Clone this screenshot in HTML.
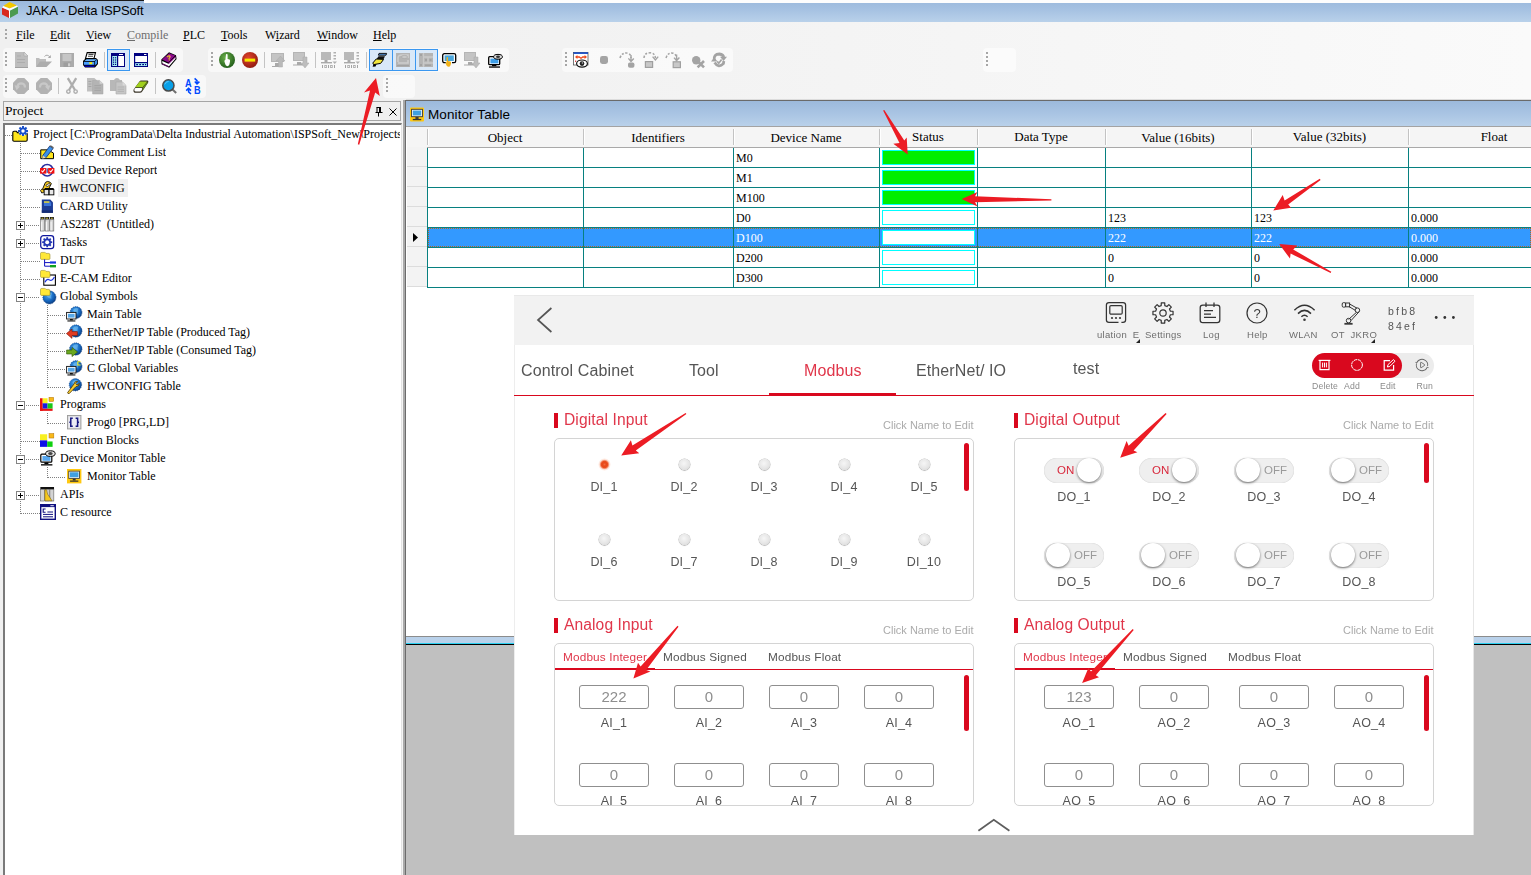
<!DOCTYPE html>
<html><head><meta charset="utf-8"><title>JAKA - Delta ISPSoft</title>
<style>
*{box-sizing:border-box;margin:0;padding:0}
html,body{width:1531px;height:875px;overflow:hidden;background:#f0f0f0}
body{position:relative;font-family:"Liberation Serif",serif;font-size:12px;color:#000}
.abs,.abs-c>*{position:absolute}
svg{position:absolute;overflow:visible}
.sans{font-family:"Liberation Sans",sans-serif}
/* title */
#title{left:0;top:0;width:1531px;height:22px;background:linear-gradient(#9ab8dc 0,#a6c2e2 45%,#b9d1ea 100%)}
#title .t{left:26px;top:2px;font:13px/18px "Liberation Sans",sans-serif;letter-spacing:-0.2px;color:#000;white-space:nowrap}
/* menu */
#menu{left:0;top:22px;width:1531px;height:78px;background:linear-gradient(90deg,#f0f0f0 0,#f0f0f0 18%,#f4f4f4 55%,#fafafa 100%)}
#menu span{position:absolute;top:5px;font:12px/16px "Liberation Serif",serif;white-space:nowrap}
#menu span.dis{color:#6d6d6d}
/* toolbars */
.tb{position:absolute;background:rgba(255,255,255,.55);border-radius:4px}
.grip{position:absolute;width:2px;height:14px;background:repeating-linear-gradient(#a6a6a6 0 2px,transparent 2px 4px)}
.sel{position:absolute;background:#d9e8f8;border:1px solid #3a97f0}
.vsep{position:absolute;width:1px;height:18px;background:#c4c4c4}
/* project panel */
#projhead{left:3px;top:101px;width:398px;height:20px;border:1px solid #a5a5a5;background:#f0f0f0}
#projhead .t{left:1px;top:0px;font:13.5px/18px "Liberation Serif",serif}
#tree{left:3px;top:123px;width:399px;height:760px;background:#fff;border-left:2px solid #7a7a7a;border-top:2px solid #7a7a7a;border-right:1px solid #e3e3e3}
.tr{position:absolute;white-space:nowrap;overflow:hidden;max-width:367px;font:12px/18px "Liberation Serif",serif;height:18px}
.hl{position:absolute;background:#f0f0f0}
.dotv{position:absolute;width:1px;background:repeating-linear-gradient(#808080 0 1px,transparent 1px 2px)}
.doth{position:absolute;height:1px;background:repeating-linear-gradient(90deg,#808080 0 1px,transparent 1px 2px)}
.pm{position:absolute;width:9px;height:9px;border:1px solid #848484;background:#fff}
.pm:before{content:"";position:absolute;left:1px;top:3px;width:5px;height:1px;background:#000}
.pm.plus:after{content:"";position:absolute;left:3px;top:1px;width:1px;height:5px;background:#000}
/* splitter */
#split{left:402px;top:100px;width:4px;height:775px;background:linear-gradient(90deg,#f4f4f4 0 1px,#a9a9a9 1px 3px,#6c6c6c 3px 4px)}
/* monitor */
#mon{left:406px;top:100px;width:1125px;height:545px;background:#fff}
#montitle{left:406px;top:100px;width:1125px;height:27px;background:linear-gradient(#9cb9db 0,#a9c4e3 50%,#b9d1ea 100%);border-top:1px solid #6a6a6a;border-bottom:1px solid #a3a3a3}
#montitle .t{left:22px;top:5px;font:13.5px/18px "Liberation Sans",sans-serif;letter-spacing:.1px;white-space:nowrap}
.th{position:absolute;top:127px;height:21px;background:#f5f5f5;border-bottom:1px solid #a9a9a9;font:13px/20px "Liberation Serif",serif;text-align:center;white-space:nowrap}
.hs{position:absolute;top:129px;width:2px;height:16px;background:linear-gradient(90deg,#c3c3c3 0 1px,#fff 1px 2px)}
.rh{position:absolute;left:407px;width:20px;height:20px;background:#f3f3f3;border-bottom:1px solid #dcdcdc}
.gl{position:absolute;background:#078080}
.ct{position:absolute;font:12px/20px "Liberation Serif",serif;white-space:nowrap}
.st{position:absolute;left:882px;width:93px;height:15px;border:1px solid #00ffff;background:#fff}
.st.on{background:#00ee00}
</style></head>
<body>
<div id="title" class="abs">
 <div class="abs" style="left:0;top:0;width:144px;height:1px;background:#1a1a1a"></div>
 <div class="abs" style="left:144px;top:0;width:1387px;height:3px;background:#fdfdfd"></div>
 <svg style="left:2px;top:2px" width="16" height="17" viewBox="0 0 16 17"><polygon points="1.2,4 7.5,0 15,3.5 7.6,6.6" fill="#f3c800"/><polygon points="0,5.5 7,8.6 7,16 0,12.6" fill="#d8281e"/><polygon points="8,8.6 16,4.6 16,11.6 8,16" fill="#4c9a50"/><polygon points="0,5.5 1.2,4 7.6,6.6 15,3.5 16,4.6 8,8.6 8,16 7,16 7,8.6" fill="#fff"/></svg>
 <div class="abs t">JAKA - Delta ISPSoft</div>
</div>
<div id="menu" class="abs">
 <div class="grip" style="left:5px;top:7px;height:10px"></div>
 <span style="left:16px"><u>F</u>ile</span><span style="left:50px"><u>E</u>dit</span><span style="left:86px"><u>V</u>iew</span><span class="dis" style="left:127px"><u>C</u>ompile</span><span style="left:183px"><u>P</u>LC</span><span style="left:221px"><u>T</u>ools</span><span style="left:265px">W<u>i</u>zard</span><span style="left:317px"><u>W</u>indow</span><span style="left:373px"><u>H</u>elp</span>
</div>
<!-- toolbar strips -->
<div class="tb" style="left:3px;top:48px;width:180px;height:24px"></div>
<div class="tb" style="left:208px;top:48px;width:301px;height:24px"></div>
<div class="tb" style="left:562px;top:48px;width:171px;height:24px"></div>
<div class="tb" style="left:983px;top:48px;width:33px;height:24px"></div>
<div class="tb" style="left:3px;top:75px;width:203px;height:23px"></div>
<div class="tb" style="left:383px;top:75px;width:32px;height:23px"></div>
<div class="grip" style="left:5px;top:52px"></div>
<div class="grip" style="left:211px;top:52px"></div>
<div class="grip" style="left:565px;top:52px"></div>
<div class="grip" style="left:986px;top:52px"></div>
<div class="grip" style="left:5px;top:78px"></div>
<div class="grip" style="left:386px;top:78px"></div>
<div class="vsep" style="left:104px;top:52px;height:16px"></div>
<div class="vsep" style="left:155px;top:52px;height:16px"></div>
<div class="vsep" style="left:264px;top:52px;height:16px"></div>
<div class="vsep" style="left:315px;top:52px;height:16px"></div>
<div class="vsep" style="left:366px;top:52px;height:16px"></div>
<div class="vsep" style="left:58px;top:78px;height:16px"></div>
<div class="vsep" style="left:155px;top:78px;height:16px"></div>
<div class="sel" style="left:107px;top:49px;width:23px;height:22px"></div>
<div class="sel" style="left:369px;top:49px;width:24px;height:22px"></div>
<div class="sel" style="left:392px;top:49px;width:24px;height:22px"></div>
<div class="sel" style="left:415px;top:49px;width:23px;height:22px"></div>
<!-- row1 icons -->
<svg style="left:15px;top:52px" width="13" height="16" viewBox="0 0 13 16"><path d="M0,0H9L13,4V16H0Z" fill="#bdbdbd"/><path d="M9,0V4H13Z" fill="#d8d8d8" stroke="#a8a8a8" stroke-width=".6"/><path d="M2,4H6M2,7.5H10M2,10.5H10" stroke="#adadad" stroke-width="1"/><path d="M0,15.5H13" stroke="#a0a0a0"/></svg>
<svg style="left:36px;top:54px" width="16" height="14" viewBox="0 0 16 14"><path d="M0,13V4H3L4,5H10V8" fill="#bcbcbc"/><path d="M0,13L4,7.5H16L10.5,13Z" fill="#adadad"/><path d="M8.5,2.5Q11,-0.5 14,3.2" fill="none" stroke="#a8a8a8" stroke-width="1"/><path d="M14.8,1V4H11.8Z" fill="#a8a8a8"/></svg>
<svg style="left:60px;top:53px" width="14" height="14" viewBox="0 0 14 14"><rect width="14" height="14" fill="#ababab"/><rect x="2.5" y="1" width="9" height="7" fill="#c6c6c6"/><rect x="3.5" y="9.5" width="7.5" height="4.5" fill="#9e9e9e"/><rect x="8" y="10.3" width="2.3" height="3" fill="#cfcfcf"/></svg>
<svg style="left:82px;top:52px" width="16" height="16" viewBox="0 0 16 16"><path d="M1,9L4,6H14L16,8V12L13,15.5H3L1,13Z" fill="#000"/><path d="M3.5,6.5L5.2,0.6H13.5L12,6.5Z" fill="#fff" stroke="#000" stroke-width="1.1"/><path d="M6.5,2.4H11.5M6,4.2H11" stroke="#444" stroke-width="1.1"/><rect x="1.8" y="9.8" width="10.4" height="3" fill="#4aa0ff"/><rect x="7.3" y="10.2" width="3" height="2" fill="#ffee00"/><path d="M12.8,9.5L15.2,7.5V11.5L12.8,13.5Z" fill="#3a8be8"/><path d="M4.5,7.2H13L14.8,7.2L12.5,9H2.5Z" fill="#6ab4ff"/><rect x="2.5" y="13.6" width="10" height="1.2" fill="#0000d0"/></svg>
<svg style="left:111px;top:53px" width="14" height="14" viewBox="0 0 14 14"><rect width="14" height="14" fill="#000080"/><rect x="1.2" y="3" width="4.8" height="10" fill="#a6f2f2"/><rect x="7.2" y="3" width="5.8" height="10" fill="#fff"/><rect x="8" y="1" width="4" height="1" fill="#fff"/><g fill="#000080"><rect x="2" y="4.2" width="1.2" height="1.2"/><rect x="4" y="4.2" width="1.2" height="1.2"/><rect x="2" y="6.4" width="1.2" height="1.2"/><rect x="4" y="6.4" width="1.2" height="1.2"/><rect x="2" y="8.6" width="1.2" height="1.2"/><rect x="4" y="8.6" width="1.2" height="1.2"/><rect x="2" y="10.8" width="1.2" height="1.2"/><rect x="4" y="10.8" width="1.2" height="1.2"/></g></svg>
<svg style="left:134px;top:53px" width="14" height="14" viewBox="0 0 14 14"><rect width="14" height="14" fill="#000080"/><rect x="1.2" y="3" width="11.8" height="6" fill="#fff"/><rect x="1.2" y="10.2" width="11.8" height="2.8" fill="#a6f2f2"/><rect x="10" y="1" width="2.4" height="1" fill="#fff"/><g fill="#000080"><rect x="2.2" y="11" width="1.8" height="1.2"/><rect x="5.2" y="11" width="1.8" height="1.2"/><rect x="8.2" y="11" width="1.8" height="1.2"/><rect x="11" y="11" width="1.2" height="1.2"/></g></svg>
<svg style="left:161px;top:52px" width="16" height="16" viewBox="0 0 16 16"><path d="M0.3,7.5L8,0.3L15,3.2L15.6,7L8.2,15.7L0.5,12.2Z" fill="#000"/><path d="M1,7.6L8.2,1.2L14.2,3.6L7.4,10.6Z" fill="#8a0a8a"/><path d="M1.2,9L7.4,11.8L14.5,5V6.8L8,14.2L1.4,11.2Z" fill="#fff"/><path d="M7.4,11.2L14.4,4.2L14.5,5.2L7.6,12.2Z" fill="#8a0a8a"/><path d="M1.3,11.6L8,14.6L8.2,15.2L1.2,12.2Z" fill="#8a0a8a"/><text x="5.6" y="8.4" font-family="Liberation Sans,sans-serif" font-weight="bold" font-size="7" fill="#ffe800" transform="rotate(-12 8 6)">?</text></svg>
<svg style="left:219px;top:52px" width="16" height="16" viewBox="0 0 16 16"><defs><radialGradient id="gg" cx=".4" cy=".35" r=".7"><stop offset="0" stop-color="#6bb04a"/><stop offset="1" stop-color="#1f5a18"/></radialGradient><radialGradient id="rg" cx=".4" cy=".35" r=".7"><stop offset="0" stop-color="#e2442c"/><stop offset="1" stop-color="#8e1a10"/></radialGradient></defs><circle cx="8" cy="8" r="8" fill="url(#gg)"/><path d="M7,2.2Q8,1.6 8.6,2.4V7L10.6,7.6Q11.2,8 11,9.4L10.4,12.6Q9.6,14.2 8.4,14.2Q6.6,14 6.4,12.6L5.4,9.4Q5.4,8 6.4,7.8Z" fill="#fff"/></svg>
<svg style="left:242px;top:52px" width="16" height="16" viewBox="0 0 16 16"><circle cx="8" cy="8" r="8" fill="url(#rg)"/><rect x="2.6" y="6.6" width="10.6" height="3" fill="#f6ea00"/></svg>
<svg style="left:271px;top:53px" width="15" height="15" viewBox="0 0 15 15"><path d="M0,0H13V9H0Z" fill="#b5b5b5"/><rect x="1" y="1" width="11" height="7" fill="#c4c4c4"/><path d="M4,10H9V12H11V14H1V13H4Z" fill="#a9a9a9"/><path d="M9.5,3L14,8H11.5V14H7.5V8H5Z" fill="#b9b9b9" stroke="#aaa" stroke-width=".5"/></svg>
<svg style="left:293px;top:52px" width="16" height="16" viewBox="0 0 16 16"><path d="M0,0H12V9H0Z" fill="#b5b5b5"/><rect x="1" y="1" width="10" height="7" fill="#c4c4c4"/><path d="M4,10H8V12H10V13.5H0V12.5H4Z" fill="#a9a9a9"/><path d="M10,5H14V11H16L12,16L8,11H10Z" fill="#bdbdbd" stroke="#aaa" stroke-width=".5"/></svg>
<svg style="left:321px;top:52px" width="16" height="16" viewBox="0 0 16 16"><rect x="0" y="0" width="10" height="8" fill="#b9b9b9"/><rect x="3.5" y="8" width="3" height="2" fill="#a9a9a9"/><rect x="0" y="10" width="11" height="1.4" fill="#a9a9a9"/><g fill="#b0b0b0"><rect x="12.5" y="0" width="2.5" height="1.5"/><rect x="12.5" y="3" width="2.5" height="1.5"/><rect x="12.5" y="6" width="2.5" height="1.5"/><path d="M11.5,9.5H16L13.75,12Z"/></g><g fill="#a3a3a3"><rect x="1" y="13" width="1" height="3"/><rect x="3.4" y="13" width="2.4" height="3"/><rect x="7" y="13" width="1" height="3"/><rect x="9.2" y="13" width="2.4" height="3"/><rect x="13" y="13" width="1" height="3"/></g><g fill="#f5f5f5"><rect x="4.1" y="13.8" width="1" height="1.4"/><rect x="9.9" y="13.8" width="1" height="1.4"/></g></svg>
<svg style="left:344px;top:52px" width="16" height="16" viewBox="0 0 16 16"><rect x="0" y="0" width="10" height="8" fill="#b9b9b9"/><rect x="3.5" y="8" width="3" height="2" fill="#a9a9a9"/><rect x="0" y="10" width="11" height="1.4" fill="#a9a9a9"/><g fill="#b0b0b0"><rect x="12.5" y="0" width="2.5" height="1.5"/><rect x="12.5" y="3" width="2.5" height="1.5"/><rect x="12.5" y="6" width="2.5" height="1.5"/><path d="M11.5,9.5H16L13.75,12Z"/></g><g fill="#a3a3a3"><rect x="1" y="13" width="1" height="3"/><rect x="3.4" y="13" width="2.4" height="3"/><rect x="7" y="13" width="1" height="3"/><rect x="9.2" y="13" width="2.4" height="3"/><rect x="13" y="13" width="1" height="3"/></g><g fill="#f5f5f5"><rect x="4.1" y="13.8" width="1" height="1.4"/><rect x="9.9" y="13.8" width="1" height="1.4"/></g></svg>
<svg style="left:372px;top:53px" width="16" height="15" viewBox="0 0 16 15"><path d="M7,0.4H14.6L14,2.2H6.4Z" fill="#5aa0f0" stroke="#000" stroke-width=".9"/><path d="M6.5,3.2H13L11.5,6.2H4.5Z" fill="#111"/><path d="M4.2,6L11.6,6.4L8.6,10.4L1.6,11.6L0.8,10Z" fill="#f2e63c" stroke="#000" stroke-width="1"/><path d="M1.4,11.6L4.4,11.2L3.6,13.6L0.6,13.8Z" fill="#000"/></svg>
<svg style="left:396px;top:53px" width="14" height="14" viewBox="0 0 14 14"><rect width="14" height="14" fill="#b4b4b4"/><path d="M2,9V5Q2,2 6,2H12V5M2,10H12V7" fill="none" stroke="#cdcdcd" stroke-width="1.6"/><ellipse cx="8.5" cy="4" rx="3" ry="1.6" fill="#c8c8c8" stroke="#a2a2a2" stroke-width=".6"/><rect x="1" y="12" width="12" height="1.4" fill="#a2a2a2"/></svg>
<svg style="left:419px;top:53px" width="14" height="14" viewBox="0 0 14 14"><rect width="14" height="14" fill="#b4b4b4"/><path d="M4.5,0V14M4.5,4H14M4.5,10H14M9,4V10" stroke="#c9c9c9" stroke-width="1.3" fill="none"/><g fill="#a2a2a2"><rect x="1" y="1" width="2" height="2"/><rect x="1" y="11" width="2" height="2"/><rect x="6" y="6" width="2" height="2"/><rect x="10.5" y="6" width="2" height="2"/><rect x="6" y="11.5" width="6" height="1.5"/></g></svg>
<svg style="left:442px;top:53px" width="15" height="15" viewBox="0 0 15 15"><rect x="0.7" y="0.7" width="13" height="9" rx="1.6" fill="#fff" stroke="#000" stroke-width="1.3"/><rect x="2.6" y="2.4" width="9.2" height="5.6" fill="#4aa6dc"/><rect x="3.8" y="9" width="6.2" height="2.4" fill="#f8f8f8"/><path d="M4.6,4.4Q5.3,3.8 6,4.4V8L8.4,8.6Q9.4,9 9,10.6L8.4,12.6Q7.8,14 6.4,13.8Q5,13.6 4.4,12.2L3.6,10.2Q3.6,9.4 4.6,9.2Z" fill="#f2b21a"/></svg>
<svg style="left:464px;top:52px" width="16" height="16" viewBox="0 0 16 16"><path d="M0,0H12V9H0Z" fill="#b5b5b5"/><rect x="1" y="1" width="10" height="7" fill="#c4c4c4"/><path d="M4,10H8V12H10V13.5H0V12.5H4Z" fill="#a9a9a9"/><path d="M10,5H14V11H16L12,16L8,11H10Z" fill="#bdbdbd" stroke="#aaa" stroke-width=".5"/></svg>
<svg style="left:488px;top:54px" width="15" height="14" viewBox="0 0 15 14"><rect x="0.7" y="2.7" width="11" height="8" rx="1" fill="#fff" stroke="#000" stroke-width="1.3"/><rect x="2.4" y="4.6" width="8" height="4.8" fill="#3f9fe8"/><rect x="4" y="10.8" width="4.4" height="1.4" fill="#000"/><rect x="1" y="12.4" width="11" height="1.3" fill="#000"/><ellipse cx="10" cy="2.8" rx="4.4" ry="2.4" fill="#ddd" stroke="#000" stroke-width="1"/><ellipse cx="10" cy="2.8" rx="2" ry="1.3" fill="#333"/></svg>
<!-- debug toolbar -->
<svg style="left:573px;top:52px" width="16" height="16" viewBox="0 0 16 16"><rect x="0.5" y="0.5" width="14.5" height="12.5" fill="#fff" stroke="#555" stroke-width=".8"/><rect x="0.5" y="0.3" width="14.5" height="1.6" fill="#1048c8"/><path d="M2,5L4.4,3V4.2H6.5L8,5.4L9.5,4.2H11.6V3L14,5L11.6,7V5.8H9.8L8,7L6.2,5.8H4.4V7Z" fill="#f0481a"/><rect x="2" y="8.6" width="1.2" height="1.2" fill="#e02020"/><ellipse cx="9" cy="11.6" rx="5.4" ry="3.6" fill="#fff" stroke="#111" stroke-width="1.2"/><circle cx="9" cy="11.6" r="2.3" fill="#222"/><circle cx="9.4" cy="11" r=".8" fill="#bbb"/></svg>

<svg style="left:600px;top:56px" width="8" height="8" viewBox="0 0 8 8"><rect width="8" height="8" rx="2.4" fill="#a4a4a4"/></svg>
<svg style="left:619px;top:52px" width="16" height="16" viewBox="0 0 16 16"><path d="M1,6Q3,0 9,1.2Q12,2.4 12,6" fill="none" stroke="#a4a4a4" stroke-width="1.5" stroke-dasharray="2.2 1.6"/><path d="M12,3V9M9.4,6.4L12,9.4L14.8,6.4" fill="none" stroke="#a4a4a4" stroke-width="1.4"/><rect x="9" y="10.4" width="6.4" height="5.4" rx="1.8" fill="#a4a4a4"/></svg>
<svg style="left:643px;top:52px" width="16" height="16" viewBox="0 0 16 16"><path d="M1,6Q1.4,0.6 7.4,0.8Q12,1.2 12.4,6" fill="none" stroke="#a4a4a4" stroke-width="1.5" stroke-dasharray="2.2 1.6"/><path d="M9.6,4.6L12.4,8L15.2,4.6" fill="none" stroke="#a4a4a4" stroke-width="1.4"/><rect x="2.4" y="9.6" width="7.2" height="5.8" fill="#c8c8c8" stroke="#a0a0a0" stroke-width="1.2"/></svg>
<svg style="left:665px;top:52px" width="16" height="16" viewBox="0 0 16 16"><path d="M1,6Q3,0 8,1.2Q11,2.4 11.4,5" fill="none" stroke="#a4a4a4" stroke-width="1.5" stroke-dasharray="2.2 1.6"/><path d="M11.6,2.4V8.6M9,5.6L11.6,8.6L14.4,5.6" fill="none" stroke="#a4a4a4" stroke-width="1.4"/><rect x="8.2" y="9.8" width="7.2" height="5.8" fill="#c8c8c8" stroke="#a0a0a0" stroke-width="1.2"/></svg>
<svg style="left:692px;top:56px" width="13" height="12" viewBox="0 0 13 12"><circle cx="4.2" cy="4.2" r="4.2" fill="#a4a4a4"/><path d="M5.6,5L12,11.4M12,5L5.6,11.4" stroke="#a4a4a4" stroke-width="2.6"/></svg>
<svg style="left:711px;top:52px" width="16" height="16" viewBox="0 0 16 16"><path d="M3.2,8.4Q2.4,2.2 8.4,2Q12.4,2.4 12.6,5.4" fill="none" stroke="#a4a4a4" stroke-width="2.8"/><path d="M9,4.8H16L12.6,9Z" fill="#a4a4a4"/><path d="M0,9.4H6.6L3.2,5.6Z" fill="#a4a4a4"/><path d="M3.6,10.4Q7.6,16.6 12.4,11.6L12.8,9" fill="none" stroke="#a4a4a4" stroke-width="2.8"/><path d="M6.2,9.4L7.8,11.2L10.6,7.6" fill="none" stroke="#a4a4a4" stroke-width="1.7"/></svg>
<!-- row2 icons -->
<svg style="left:13px;top:78px" width="16" height="16" viewBox="0 0 16 16"><path d="M4.7,0H11.3L16,4.7V11.3L11.3,16H4.7L0,11.3V4.7Z" fill="#b2b2b2"/><path d="M4.4,9.6Q4.6,5.4 8.4,5.4Q12,5.6 12,9.6" fill="none" stroke="#c8c8c8" stroke-width="2.2"/><path d="M1.6,7.2L7,8.6L3.6,12.2Z" fill="#c8c8c8"/></svg>
<svg style="left:36px;top:78px" width="16" height="16" viewBox="0 0 16 16"><path d="M4.7,0H11.3L16,4.7V11.3L11.3,16H4.7L0,11.3V4.7Z" fill="#b2b2b2"/><path d="M4,9.6Q4,5.6 7.6,5.4Q11.4,5.4 11.6,9.6" fill="none" stroke="#c8c8c8" stroke-width="2.2"/><path d="M14.4,7.2L9,8.6L12.4,12.2Z" fill="#c8c8c8"/></svg>
<svg style="left:66px;top:78px" width="12" height="16" viewBox="0 0 12 16"><path d="M1.8,0.2L9,12M10.2,0.2L3,12" stroke="#adadad" stroke-width="2.3" fill="none"/><circle cx="2.4" cy="13.6" r="1.7" fill="none" stroke="#adadad" stroke-width="1.4"/><circle cx="9.6" cy="13.6" r="1.7" fill="none" stroke="#adadad" stroke-width="1.4"/></svg>
<svg style="left:87px;top:78px" width="16" height="16" viewBox="0 0 16 16"><path d="M0,0H7.4L10,2.6V13.4H0Z" fill="#c0c0c0"/><path d="M5.6,2.4H12.6L16,5.8V16H5.6Z" fill="#b4b4b4" stroke="#a6a6a6" stroke-width=".5"/><path d="M1.4,3.5H4.4M1.4,6H4.4M1.4,8.5H4.4M7.4,7.6H14M7.4,10H14M7.4,12.4H14" stroke="#a3a3a3" stroke-width=".9"/><path d="M12.6,2.4V5.8H16Z" fill="#d4d4d4"/></svg>
<svg style="left:110px;top:78px" width="16" height="16" viewBox="0 0 16 16"><path d="M0,2H4Q5.4,-0.6 8.6,0.4L10,2H12V13H0Z" fill="#b8b8b8"/><path d="M6,4H12.6L16,7.4V16H6Z" fill="#c6c6c6" stroke="#ababab" stroke-width=".6"/><path d="M7.6,9H14M7.6,11.2H14M7.6,13.4H14" stroke="#b0b0b0" stroke-width=".9"/><path d="M12.6,4V7.4H16Z" fill="#dadada"/></svg>
<svg style="left:133px;top:80px" width="16" height="14" viewBox="0 0 16 14"><path d="M0.6,9.4L6.6,1.2Q7,0.5 8,0.5H14.4Q15.8,0.7 15.2,2.4L9.2,11.6Q8.4,12.8 7,12.8H2Q0,12.4 0.6,9.4Z" fill="#3a3428"/><path d="M2.2,7.2L6.8,1.4H14.2L9.6,7.2Z" fill="#a0d01c"/><path d="M10,7.6L14.6,1.8L14.4,3.2L9.4,10.6Z" fill="#6c9c14"/><path d="M1.4,9.2Q1.6,8 3,8H8.4Q9.6,8 9,9.4L8.4,10.8Q8,11.6 7,11.6H2.6Q1,11.4 1.4,9.2Z" fill="#fff"/></svg>
<svg style="left:162px;top:79px" width="15" height="15" viewBox="0 0 15 15"><path d="M10,10L14.2,14" stroke="#707070" stroke-width="2"/><circle cx="6.4" cy="6.4" r="5.6" fill="#08a0e8" stroke="#4a4a4a" stroke-width="1.5"/><path d="M2.8,5.4Q3.6,2.6 6.6,2.4" fill="none" stroke="#60c8f8" stroke-width="1"/></svg>
<svg style="left:185px;top:77px" width="16" height="18" viewBox="0 0 16 18"><text x="0" y="10.2" font-family="Liberation Sans,sans-serif" font-weight="bold" font-size="11.5" fill="#0048ff" transform="scale(.8 1)">A</text><text x="11.4" y="17.2" font-family="Liberation Sans,sans-serif" font-weight="bold" font-size="11.5" fill="#0048ff" transform="scale(.8 1)">B</text><path d="M9.6,1.4L12,3.6V6.4M9.8,4.6L12,7L14.4,4.6" fill="none" stroke="#0048ff" stroke-width="1.5"/><path d="M6,17L3.6,14.8V11.8M1.2,13.6L3.6,11.2L6,13.6" fill="none" stroke="#0048ff" stroke-width="1.5"/></svg>
<!-- separator line under toolbars -->
<div class="abs" style="left:406px;top:99px;width:1125px;height:1px;background:#dcdcdc"></div>
<svg width="0" height="0" style="left:0;top:0"><defs><radialGradient id="gl" cx=".4" cy=".35" r=".75"><stop offset="0" stop-color="#4aa4ea"/><stop offset=".55" stop-color="#1668c0"/><stop offset="1" stop-color="#08306e"/></radialGradient></defs></svg>
<div id="projhead" class="abs"><div class="abs t">Project</div>
<svg style="left:371px;top:5px" width="8" height="10" viewBox="0 0 8 10"><path d="M1.5,0.5H6M2,0.5V5M5.5,0.5V5M4.5,0.5V5M0.5,5.5H7.5M3.5,6V9.5" fill="none" stroke="#000" stroke-width="1"/></svg>
<svg style="left:385px;top:6px" width="8" height="8" viewBox="0 0 8 8"><path d="M0.5,0.5L7.5,7.5M7.5,0.5L0.5,7.5" stroke="#000" stroke-width="1"/></svg></div>
<div id="tree" class="abs"></div>
<div class="hl" style="left:58px;top:179px;width:70px;height:18px"></div>
<div class="dotv" style="left:20px;top:143px;height:371px"></div>
<div class="doth" style="left:5px;top:135px;width:8px"></div>
<div class="dotv" style="left:47px;top:305px;height:83px"></div>
<div class="dotv" style="left:47px;top:413px;height:11px"></div>
<div class="dotv" style="left:47px;top:467px;height:11px"></div>
<svg style="left:12px;top:126px" width="16" height="16" viewBox="0 0 16 16"><path d="M0.8,6.5Q0.8,5.2 2,5.2H4.4L5.4,6.6H14Q15.2,6.6 15.2,8V14Q15.2,15.2 14,15.2H2Q0.8,15.2 0.8,14Z" fill="#ffe61e" stroke="#000" stroke-width="1.1"/><circle cx="11" cy="5" r="4.6" fill="#fff"/><g fill="#1a50c8"><circle cx="11" cy="5" r="3.5"/><rect x="10" y="0" width="2" height="10"/><rect x="6" y="4" width="10" height="2"/><rect x="10" y="0" width="2" height="10" transform="rotate(45 11 5)"/><rect x="10" y="0" width="2" height="10" transform="rotate(-45 11 5)"/></g><circle cx="11" cy="5" r="1.7" fill="#fff"/></svg>
<div class="tr" style="left:33px;top:125px">Project [C:\ProgramData\Delta Industrial Automation\ISPSoft_New\Projects</div>
<div class="doth" style="left:21px;top:153px;width:19px"></div>
<svg style="left:40px;top:145px" width="14.4" height="14.4" viewBox="0 0 16 16"><path d="M0.8,5.4H9L15,9V15.2H0.8Z" fill="#ffe61e" stroke="#000" stroke-width="1.1"/><path d="M3,11.8L10.8,1.2L14.6,3.8L6.6,14.2L2.6,15Z" fill="#3a90e8" stroke="#14306a" stroke-width=".9"/><path d="M3,11.8L6.6,14.2L2.6,15Z" fill="#f4d8a0"/><path d="M10.8,1.2L12,0.2L15.4,2.6L14.6,3.8Z" fill="#606060"/></svg>
<div class="tr" style="left:60px;top:143px">Device Comment List</div>
<div class="doth" style="left:21px;top:171px;width:19px"></div>
<svg style="left:40px;top:163px" width="14.4" height="14.4" viewBox="0 0 16 16"><circle cx="8" cy="8" r="6.4" fill="#fff" stroke="#2a2ea0" stroke-width="1.8"/><rect x="0" y="5.6" width="7" height="6.2" fill="#f01010"/><rect x="9" y="5.6" width="7" height="6.2" fill="#f01010"/><path d="M1.6,8.4L3,10L5.4,6.8M10.6,8.4L12,10L14.4,6.8" fill="none" stroke="#fff" stroke-width="1.2"/><rect x="7.4" y="6" width="1.2" height="5" fill="#2a2ea0"/></svg>
<div class="tr" style="left:60px;top:161px">Used Device Report</div>
<div class="doth" style="left:21px;top:189px;width:19px"></div>
<svg style="left:40px;top:181px" width="14.4" height="14.4" viewBox="0 0 16 16"><path d="M2,11L6,1.6Q8,-0.4 11,1.2L12.6,3L8,12Z" fill="#f4c820" stroke="#000" stroke-width="1"/><path d="M6.6,4.6L10.6,2.6L11.4,4.2L7.6,6.4Z" fill="#fff" stroke="#000" stroke-width=".7"/><path d="M0.6,10.6Q1.6,8.2 4,9.4L5,12L2,13.4Z" fill="#f4c820" stroke="#000" stroke-width=".9"/><rect x="4.6" y="9.4" width="5.2" height="6" fill="#e8e8e8" stroke="#000" stroke-width="1"/><rect x="10.2" y="9.4" width="5.2" height="6" fill="#e8e8e8" stroke="#000" stroke-width="1"/><rect x="5.2" y="7.8" width="10" height="1.6" fill="#000"/></svg>
<div class="tr" style="left:60px;top:179px">HWCONFIG</div>
<div class="doth" style="left:21px;top:207px;width:19px"></div>
<svg style="left:40px;top:199px" width="14.4" height="14.4" viewBox="0 0 16 16"><path d="M2,0.6H11.4L14.4,3.6V15.4H2Z" fill="#1c3c94"/><path d="M4.4,2.6H10.8L12.4,4.2V7.8H4.4Z" fill="#3c74d8"/><rect x="4.4" y="2.6" width="6" height="1.6" fill="#e8d830"/><path d="M2,12.6H14.4V15.4H2Z" fill="#142c74"/></svg>
<div class="tr" style="left:60px;top:197px">CARD Utility</div>
<div class="doth" style="left:26px;top:225px;width:14px"></div>
<div class="pm plus" style="left:16px;top:221px"></div>
<svg style="left:40px;top:217px" width="14.4" height="14.4" viewBox="0 0 16 16"><g><rect x="0.6" y="0" width="4.4" height="2.6" fill="#111"/><rect x="5.8" y="0" width="4.4" height="2.6" fill="#111"/><rect x="11" y="0" width="4.4" height="2.6" fill="#111"/><rect x="1.6" y="0.8" width="2.2" height="1" fill="#f4e040"/><rect x="6.8" y="0.8" width="2.2" height="1" fill="#f4e040"/><rect x="12" y="0.8" width="2.2" height="1" fill="#f4e040"/><rect x="0.6" y="2.6" width="4.4" height="13" fill="#d4d4d4" stroke="#555" stroke-width=".6"/><rect x="5.8" y="2.6" width="4.4" height="13" fill="#d4d4d4" stroke="#555" stroke-width=".6"/><rect x="11" y="2.6" width="4.4" height="13" fill="#d4d4d4" stroke="#555" stroke-width=".6"/><rect x="1.2" y="5" width="1.4" height="10" fill="#f6f6f6"/><rect x="6.4" y="5" width="1.4" height="10" fill="#f6f6f6"/><rect x="11.6" y="5" width="1.4" height="10" fill="#f6f6f6"/></g></svg>
<div class="tr" style="left:60px;top:215px">AS228T&nbsp; (Untitled)</div>
<div class="doth" style="left:26px;top:243px;width:14px"></div>
<div class="pm plus" style="left:16px;top:239px"></div>
<svg style="left:40px;top:235px" width="14.4" height="14.4" viewBox="0 0 16 16"><rect x="0.8" y="0.8" width="14.4" height="14.4" rx="3" fill="#fff" stroke="#10189c" stroke-width="1.4"/><g fill="#2438b4"><circle cx="8" cy="8" r="4.2"/><rect x="7" y="2.4" width="2" height="11.2"/><rect x="2.4" y="7" width="11.2" height="2"/><rect x="7" y="2.4" width="2" height="11.2" transform="rotate(45 8 8)"/><rect x="7" y="2.4" width="2" height="11.2" transform="rotate(-45 8 8)"/></g><circle cx="8" cy="8" r="2.2" fill="#fff"/></svg>
<div class="tr" style="left:60px;top:233px">Tasks</div>
<div class="doth" style="left:21px;top:261px;width:19px"></div>
<svg style="left:40px;top:252px" width="16" height="16" viewBox="0 0 16 16"><path d="M0.5,1.5Q0.5,0.4 1.8,0.4H4.6Q5.6,0.4 6,1.4H9Q10,1.6 10,3V6.6Q10,7.4 9,7.4H1.6Q0.5,7.4 0.5,6.4Z" fill="#ffe838" stroke="#8a7a10" stroke-width=".5"/><path d="M4.6,7.4V14.2H10M4.6,10.6H10" fill="none" stroke="#1010c0" stroke-width="1"/><rect x="10" y="9.4" width="6" height="2.2" fill="#1838e0"/><rect x="10" y="13" width="6" height="2.4" fill="#10a020"/></svg>
<div class="tr" style="left:60px;top:251px">DUT</div>
<div class="doth" style="left:21px;top:279px;width:19px"></div>
<svg style="left:40px;top:270px" width="16" height="16" viewBox="0 0 16 16"><rect x="3.8" y="5" width="11.6" height="10.2" fill="#fff" stroke="#000" stroke-width="1.1"/><path d="M5,12.2Q7,8.2 9.6,10Q12,11.4 14.4,7" fill="none" stroke="#1830e0" stroke-width="1.2"/><path d="M0.5,1.5Q0.5,0.4 1.8,0.4H4.6Q5.6,0.4 6,1.4H9Q10,1.6 10,3V6.6Q10,7.4 9,7.4H1.6Q0.5,7.4 0.5,6.4Z" fill="#ffe838" stroke="#8a7a10" stroke-width=".5"/></svg>
<div class="tr" style="left:60px;top:269px">E-CAM Editor</div>
<div class="doth" style="left:26px;top:297px;width:14px"></div>
<div class="pm" style="left:16px;top:293px"></div>
<svg style="left:40px;top:288px" width="16" height="16" viewBox="0 0 16 16"><circle cx="9.4" cy="9.4" r="6.6" fill="url(#gl)"/><path d="M6.1000000000000005,6.76q1.9799999999999998,-3.3 5.9399999999999995,-1.9799999999999998q-1.32,3.3 -0.66,5.9399999999999995q-3.9599999999999995,-0.66 -5.28,-3.9599999999999995z" fill="#7cc4f4" opacity=".55"/><circle cx="9.4" cy="9.4" r="6.6" fill="none" stroke="#0c3a7a" stroke-width=".6" stroke-dasharray="1.2 1"/><path d="M0.5,1.5Q0.5,0.4 1.8,0.4H4.6Q5.6,0.4 6,1.4H9Q10,1.6 10,3V6.6Q10,7.4 9,7.4H1.6Q0.5,7.4 0.5,6.4Z" fill="#ffe838" stroke="#8a7a10" stroke-width=".5"/></svg>
<div class="tr" style="left:60px;top:287px">Global Symbols</div>
<div class="doth" style="left:48px;top:315px;width:18px"></div>
<svg style="left:66px;top:306px" width="16" height="16" viewBox="0 0 16 16"><circle cx="10" cy="6.6" r="6" fill="url(#gl)"/><path d="M7.0,4.199999999999999q1.7999999999999998,-3.0 5.4,-1.7999999999999998q-1.2000000000000002,3.0 -0.6000000000000001,5.4q-3.5999999999999996,-0.6000000000000001 -4.800000000000001,-3.5999999999999996z" fill="#7cc4f4" opacity=".55"/><circle cx="10" cy="6.6" r="6" fill="none" stroke="#0c3a7a" stroke-width=".6" stroke-dasharray="1.2 1"/><rect x="0.6" y="6.4" width="9.4" height="6.6" fill="#fff" stroke="#111" stroke-width=".9"/><rect x="2" y="7.8" width="6.6" height="3.8" fill="#58a8e8"/><rect x="4" y="13" width="2.8" height="1.4" fill="#111"/><rect x="1.4" y="14.4" width="8" height="1.1" fill="#111"/></svg>
<div class="tr" style="left:87px;top:305px">Main Table</div>
<div class="doth" style="left:48px;top:333px;width:18px"></div>
<svg style="left:66px;top:324px" width="16" height="16" viewBox="0 0 16 16"><circle cx="9.8" cy="7" r="6.2" fill="url(#gl)"/><path d="M6.700000000000001,4.52q1.8599999999999999,-3.1 5.58,-1.8599999999999999q-1.2400000000000002,3.1 -0.6200000000000001,5.58q-3.7199999999999998,-0.6200000000000001 -4.960000000000001,-3.7199999999999998z" fill="#7cc4f4" opacity=".55"/><circle cx="9.8" cy="7" r="6.2" fill="none" stroke="#0c3a7a" stroke-width=".6" stroke-dasharray="1.2 1"/><path d="M0.4,9.6L6,5V7.6H11.4V11.6H6V14.4Z" fill="#e03a20" stroke="#7a1408" stroke-width=".6"/></svg>
<div class="tr" style="left:87px;top:323px">EtherNet/IP Table (Produced Tag)</div>
<div class="doth" style="left:48px;top:351px;width:18px"></div>
<svg style="left:66px;top:342px" width="16" height="16" viewBox="0 0 16 16"><circle cx="9.8" cy="7" r="6.2" fill="url(#gl)"/><path d="M6.700000000000001,4.52q1.8599999999999999,-3.1 5.58,-1.8599999999999999q-1.2400000000000002,3.1 -0.6200000000000001,5.58q-3.7199999999999998,-0.6200000000000001 -4.960000000000001,-3.7199999999999998z" fill="#7cc4f4" opacity=".55"/><circle cx="9.8" cy="7" r="6.2" fill="none" stroke="#0c3a7a" stroke-width=".6" stroke-dasharray="1.2 1"/><path d="M11.6,10L6,5.4V8H0.6V12H6V14.6Z" fill="#6aa820" stroke="#2c5008" stroke-width=".6"/></svg>
<div class="tr" style="left:87px;top:341px">EtherNet/IP Table (Consumed Tag)</div>
<div class="doth" style="left:48px;top:369px;width:18px"></div>
<svg style="left:66px;top:360px" width="16" height="16" viewBox="0 0 16 16"><circle cx="10" cy="6.6" r="6" fill="url(#gl)"/><path d="M7.0,4.199999999999999q1.7999999999999998,-3.0 5.4,-1.7999999999999998q-1.2000000000000002,3.0 -0.6000000000000001,5.4q-3.5999999999999996,-0.6000000000000001 -4.800000000000001,-3.5999999999999996z" fill="#7cc4f4" opacity=".55"/><circle cx="10" cy="6.6" r="6" fill="none" stroke="#0c3a7a" stroke-width=".6" stroke-dasharray="1.2 1"/><rect x="0.6" y="6.4" width="9.4" height="6.6" fill="#fff" stroke="#111" stroke-width=".9"/><rect x="2" y="7.8" width="6.6" height="3.8" fill="#58a8e8"/><rect x="4" y="13" width="2.8" height="1.4" fill="#111"/><rect x="1.4" y="14.4" width="8" height="1.1" fill="#111"/><path d="M14.6,1.8H11.8V5H14.6" fill="none" stroke="#f8f020" stroke-width="1.1"/></svg>
<div class="tr" style="left:87px;top:359px">C Global Variables</div>
<div class="doth" style="left:48px;top:387px;width:18px"></div>
<svg style="left:66px;top:378px" width="16" height="16" viewBox="0 0 16 16"><circle cx="9.4" cy="6.8" r="6.2" fill="url(#gl)"/><path d="M6.300000000000001,4.319999999999999q1.8599999999999999,-3.1 5.58,-1.8599999999999999q-1.2400000000000002,3.1 -0.6200000000000001,5.58q-3.7199999999999998,-0.6200000000000001 -4.960000000000001,-3.7199999999999998z" fill="#7cc4f4" opacity=".55"/><circle cx="9.4" cy="6.8" r="6.2" fill="none" stroke="#0c3a7a" stroke-width=".6" stroke-dasharray="1.2 1"/><path d="M1.6,14.6L8,6Q8.6,3 11.6,3.4L9.8,5.6L11,7L13.4,5.6Q13,8.6 10,8.6L3.4,15.4Q1.6,16 1.6,14.6Z" fill="#f8cc30" stroke="#4a3400" stroke-width=".8"/></svg>
<div class="tr" style="left:87px;top:377px">HWCONFIG Table</div>
<div class="doth" style="left:26px;top:405px;width:14px"></div>
<div class="pm" style="left:16px;top:401px"></div>
<svg style="left:40px;top:397px" width="14.4" height="14.4" viewBox="0 0 16 16"><rect x="0" y="1.4" width="3" height="14" fill="#e81010"/><rect x="0" y="12.8" width="14" height="2.6" fill="#e81010"/><rect x="3" y="1.4" width="5.4" height="5.6" fill="#f8f020"/><rect x="3" y="7" width="5.4" height="5.8" fill="#1818e0"/><rect x="8.4" y="7" width="5.6" height="5.8" fill="#18c818"/><rect x="10" y="0.4" width="5.2" height="4.6" fill="#f8b818" stroke="#a86800" stroke-width=".5"/></svg>
<div class="tr" style="left:60px;top:395px">Programs</div>
<div class="doth" style="left:48px;top:423px;width:18px"></div>
<svg style="left:67px;top:415px" width="14.4" height="14.4" viewBox="0 0 16 16"><rect x="0.5" y="0.5" width="15" height="15" fill="#d8d8d8" stroke="#9a9a9a"/><rect x="1.8" y="1.8" width="12.4" height="12.4" fill="#ececf4"/><path d="M6.4,3.6H4.2V12.4H6.4M9.6,3.6H11.8V12.4H9.6M4.2,8H2.6M11.8,8H13.4" fill="none" stroke="#181880" stroke-width="1.7"/></svg>
<div class="tr" style="left:87px;top:413px">Prog0 [PRG,LD]</div>
<div class="doth" style="left:21px;top:441px;width:19px"></div>
<svg style="left:40px;top:433px" width="14.4" height="14.4" viewBox="0 0 16 16"><rect x="0" y="1.4" width="8" height="6.8" fill="#f8f020"/><rect x="0" y="8.2" width="8" height="7.2" fill="#1010e8"/><rect x="8" y="9.4" width="6" height="6" fill="#10d010"/><rect x="10" y="0.6" width="5.4" height="5" fill="#f8b818" stroke="#a86800" stroke-width=".5"/></svg>
<div class="tr" style="left:60px;top:431px">Function Blocks</div>
<div class="doth" style="left:26px;top:459px;width:14px"></div>
<div class="pm" style="left:16px;top:455px"></div>
<svg style="left:40px;top:450px" width="16" height="16" viewBox="0 0 16 16"><rect x="0.8" y="4.2" width="11" height="8" rx="1" fill="#fff" stroke="#000" stroke-width="1.2"/><rect x="2.4" y="6" width="8" height="4.8" fill="#58a8f0"/><rect x="4.4" y="12.4" width="4" height="1.6" fill="#000"/><rect x="1" y="14.2" width="11.4" height="1.3" fill="#000"/><ellipse cx="10.4" cy="3.6" rx="4.8" ry="2.8" fill="#e4e4e4" stroke="#000" stroke-width="1"/><ellipse cx="10.4" cy="3.6" rx="2.2" ry="1.5" fill="#444"/></svg>
<div class="tr" style="left:60px;top:449px">Device Monitor Table</div>
<div class="doth" style="left:48px;top:477px;width:18px"></div>
<svg style="left:67px;top:469px" width="14.4" height="14.4" viewBox="0 0 16 16"><rect x="0" y="0" width="16" height="16" fill="#ffc810"/><rect x="2" y="2.4" width="12" height="8" fill="#fff" stroke="#333" stroke-width=".9"/><rect x="3.2" y="3.6" width="9.6" height="5.6" fill="#40a0e0"/><rect x="6.4" y="10.8" width="3.2" height="2" fill="#333"/><rect x="3.4" y="12.8" width="9.2" height="1.4" fill="#333"/></svg>
<div class="tr" style="left:87px;top:467px">Monitor Table</div>
<div class="doth" style="left:26px;top:495px;width:14px"></div>
<div class="pm plus" style="left:16px;top:491px"></div>
<svg style="left:40px;top:487px" width="14.4" height="14.4" viewBox="0 0 16 16"><rect x="0.4" y="0" width="15.2" height="2.6" fill="#111"/><rect x="0.6" y="2.6" width="4.4" height="13" fill="#d4d4d4" stroke="#555" stroke-width=".6"/><rect x="5.8" y="2.6" width="4.4" height="13" fill="#d4d4d4" stroke="#555" stroke-width=".6"/><rect x="11" y="2.6" width="4.4" height="13" fill="#d4d4d4" stroke="#555" stroke-width=".6"/><path d="M5.4,3V15.4H13.4L10.6,11Q8,9 7.4,3Z" fill="#f4c820" stroke="#5a4400" stroke-width=".5"/></svg>
<div class="tr" style="left:60px;top:485px">APIs</div>
<div class="doth" style="left:21px;top:513px;width:19px"></div>
<svg style="left:40px;top:504px" width="16" height="16" viewBox="0 0 16 16"><rect x="0.7" y="0.7" width="14.6" height="14.6" fill="#fff" stroke="#101080" stroke-width="1.4"/><rect x="0.7" y="0.7" width="14.6" height="2.4" fill="#101080"/><rect x="10.4" y="1.3" width="3.4" height=".9" fill="#fff"/><path d="M5.6,5H3.2V8.2H5.6" fill="none" stroke="#101080" stroke-width="1.1"/><path d="M7.4,8H13M3,10.4H13M3,12.8H13" stroke="#101080" stroke-width="1"/></svg>
<div class="tr" style="left:60px;top:503px">C resource</div>
<div id="split" class="abs"></div>
<div id="mon" class="abs"></div>
<div id="montitle" class="abs"><svg style="left:4px;top:6px" width="14" height="15" viewBox="0 0 14 14"><rect width="14" height="14" rx="1" fill="#ffc810"/><rect x="1.6" y="1.8" width="10.8" height="7.4" fill="#fff" stroke="#333" stroke-width=".9"/><rect x="2.8" y="3" width="8.4" height="5" fill="#40a0e0"/><rect x="5.4" y="9.6" width="3.2" height="1.8" fill="#333"/><rect x="2.8" y="11.4" width="8.4" height="1.3" fill="#333"/></svg><div class="abs t">Monitor Table</div></div>
<div class="th" style="left:407px;width:20px;line-height:19px"></div>
<div class="th" style="left:427px;width:156px;line-height:21px">Object</div>
<div class="th" style="left:583px;width:150px;line-height:21px">Identifiers</div>
<div class="th" style="left:733px;width:146px;line-height:21px">Device Name</div>
<div class="th" style="left:879px;width:98px;line-height:19px">Status</div>
<div class="th" style="left:977px;width:128px;line-height:19px">Data Type</div>
<div class="th" style="left:1105px;width:146px;line-height:21px">Value (16bits)</div>
<div class="th" style="left:1251px;width:157px;line-height:19px">Value (32bits)</div>
<div class="th" style="left:1408px;width:172px;line-height:19px">Float</div>
<div class="hs" style="left:427px"></div>
<div class="hs" style="left:583px"></div>
<div class="hs" style="left:733px"></div>
<div class="hs" style="left:879px"></div>
<div class="hs" style="left:977px"></div>
<div class="hs" style="left:1105px"></div>
<div class="hs" style="left:1251px"></div>
<div class="hs" style="left:1408px"></div>
<div class="rh" style="top:147px"></div>
<div class="ct" style="left:736px;top:148px">M0</div>
<div class="st on" style="top:150px"></div>
<div class="rh" style="top:167px"></div>
<div class="ct" style="left:736px;top:168px">M1</div>
<div class="st on" style="top:170px"></div>
<div class="rh" style="top:187px"></div>
<div class="ct" style="left:736px;top:188px">M100</div>
<div class="st on" style="top:190px"></div>
<div class="rh" style="top:207px"></div>
<div class="ct" style="left:736px;top:208px">D0</div>
<div class="ct" style="left:1108px;top:208px">123</div>
<div class="ct" style="left:1254px;top:208px">123</div>
<div class="ct" style="left:1411px;top:208px">0.000</div>
<div class="st" style="top:210px"></div>
<div class="rh" style="top:227px"></div>
<div class="abs" style="left:428px;top:228px;width:1103px;height:19px;background:#3399ff;outline:1px dotted #b06a20;outline-offset:-1px"></div>
<svg style="left:413px;top:233px" width="5" height="9" viewBox="0 0 5 9"><path d="M0,0L5,4.5L0,9Z" fill="#000"/></svg>
<div class="ct" style="color:#fff;left:736px;top:228px">D100</div>
<div class="ct" style="color:#fff;left:1108px;top:228px">222</div>
<div class="ct" style="color:#fff;left:1254px;top:228px">222</div>
<div class="ct" style="color:#fff;left:1411px;top:228px">0.000</div>
<div class="st" style="top:230px"></div>
<div class="rh" style="top:247px"></div>
<div class="ct" style="left:736px;top:248px">D200</div>
<div class="ct" style="left:1108px;top:248px">0</div>
<div class="ct" style="left:1254px;top:248px">0</div>
<div class="ct" style="left:1411px;top:248px">0.000</div>
<div class="st" style="top:250px"></div>
<div class="rh" style="top:267px"></div>
<div class="ct" style="left:736px;top:268px">D300</div>
<div class="ct" style="left:1108px;top:268px">0</div>
<div class="ct" style="left:1254px;top:268px">0</div>
<div class="ct" style="left:1411px;top:268px">0.000</div>
<div class="st" style="top:270px"></div>
<div class="gl" style="left:427px;top:167px;width:1104px;height:1px"></div>
<div class="gl" style="left:427px;top:187px;width:1104px;height:1px"></div>
<div class="gl" style="left:427px;top:207px;width:1104px;height:1px"></div>
<div class="gl" style="left:427px;top:227px;width:1104px;height:1px"></div>
<div class="gl" style="left:427px;top:247px;width:1104px;height:1px"></div>
<div class="gl" style="left:427px;top:267px;width:1104px;height:1px"></div>
<div class="gl" style="left:427px;top:287px;width:1104px;height:1px"></div>
<div class="gl" style="left:427px;top:148px;width:1px;height:140px"></div>
<div class="gl" style="left:583px;top:148px;width:1px;height:140px"></div>
<div class="gl" style="left:733px;top:148px;width:1px;height:140px"></div>
<div class="gl" style="left:879px;top:148px;width:1px;height:140px"></div>
<div class="gl" style="left:977px;top:148px;width:1px;height:140px"></div>
<div class="gl" style="left:1105px;top:148px;width:1px;height:140px"></div>
<div class="gl" style="left:1251px;top:148px;width:1px;height:140px"></div>
<div class="gl" style="left:1408px;top:148px;width:1px;height:140px"></div>
<div class="abs" style="left:406px;top:636px;width:1125px;height:9px;background:#b9d1ea;border-top:1px solid #8c8c8c;border-bottom:1px solid #000"></div>
<div class="abs" style="left:406px;top:643px;width:1125px;height:1px;background:#2ad0f0"></div>
<div class="abs" style="left:406px;top:645px;width:1125px;height:230px;background:#c0c0c0"></div>
<div id="ovwrap" style="position:absolute;left:0;top:0;width:1531px;height:875px;will-change:transform">
<style>
#ov{left:514px;top:295px;width:960px;height:540px;background:#fff;border-right:1px solid #e6e6e6;border-left:1px solid #ededed}
#ovh{left:514px;top:295px;width:960px;height:50px;background:#f2f2f2;border-top:1px solid #e9e9e9}
.ot{position:absolute;font-family:"Liberation Sans",sans-serif;white-space:nowrap;color:#555}
.hl10{font-size:9.5px;line-height:12px;letter-spacing:.28px;color:#6e6e6e;top:329px}
.tab{font-size:16px;line-height:20px;letter-spacing:.1px;color:#555;top:361px}
.sec{font-size:15.6px;line-height:18px;color:#e0364a;letter-spacing:.1px}
.cne{font-size:11px;line-height:13px;color:#ababab}
.bar{position:absolute;width:4px;height:15px;background:#d9081e}
.box{position:absolute;border:1px solid #d4d4d4;border-radius:5px;background:#fff}
.lbl{font-size:12.5px;line-height:14px;color:#555;text-align:center;width:60px;letter-spacing:.2px}
.led{position:absolute;width:11px;height:11px;margin:.5px 0 0 .5px;border-radius:50%;background:radial-gradient(circle at 45% 40%,#f6f6f6 0,#e6e6e6 55%,#d2d2d2 100%);box-shadow:0 .5px 1px rgba(0,0,0,.3),0 0 0 .5px #c6c6c6}
.ledon{position:absolute;width:13px;height:13px;margin:-.5px 0 0 -.5px;border-radius:50%;background:radial-gradient(circle closest-side at 50% 50%,#ee6a3c 0,#e84818 28%,#ea5020 50%,#f5997a 64%,rgba(253,214,198,.7) 78%,rgba(255,240,232,0) 100%)}
.trk{position:absolute;width:60px;height:25px;border-radius:13px;background:#efefef;box-shadow:inset 0 0 1px rgba(0,0,0,.25)}
.knob{position:absolute;width:24px;height:24px;border-radius:50%;background:#fff;box-shadow:0 1px 2.5px rgba(0,0,0,.55)}
.on{font-size:11.5px;line-height:13px;color:#d8283c}
.off{font-size:11.5px;line-height:13px;color:#9a9a9a}
.sb{position:absolute;width:5px;border-radius:3px;background:#d9081e}
.inp{position:absolute;width:70px;height:24px;border:1px solid #8f8f8f;border-radius:3px;background:#fff;font:15px/22px "Liberation Sans",sans-serif;color:#8e8e8e;text-align:center}
.stab{font-size:11.8px;line-height:14px;color:#555;letter-spacing:.15px}
.rl{position:absolute;background:#d9081e}
.act{font-size:8.7px;line-height:11px;letter-spacing:.15px;color:#8a8a8a;top:381px}
</style>
<div id="ov" class="abs"></div><div id="ovh" class="abs"></div>
<svg style="left:536px;top:306px" width="17" height="28" viewBox="0 0 17 28"><path d="M15.4,2L2,14L15.4,26" fill="none" stroke="#555" stroke-width="1.7"/></svg>
<svg style="left:1105px;top:301px" width="22" height="23" viewBox="0 0 22 23"><path d="M13.5,21.4H4Q1.4,21.4 1.4,19V4Q1.4,1.6 4,1.6H18Q20.6,1.6 20.6,4V19Q20.6,21.4 18,21.4H16.4" stroke="#333" fill="none" stroke-width="1.25"/><rect x="4.8" y="4.6" width="12.4" height="8.6" rx="1.2" stroke="#333" fill="none" stroke-width="1.2"/><circle cx="7" cy="17" r="1.1" fill="#3a3a3a"/><circle cx="11" cy="17" r="1.1" fill="#3a3a3a"/><circle cx="15" cy="17" r="1.1" fill="#3a3a3a"/></svg>
<div class="ot hl10" style="left:1097px">ulation&nbsp; E</div>
<svg style="left:1136px;top:339px" width="4" height="4" viewBox="0 0 4 4"><path d="M4,0V4H0Z" fill="#222"/></svg>
<svg style="left:1152px;top:302px" width="22" height="22" viewBox="0 0 22 22"><path d="M9.25,0.95L12.75,0.95L12.77,3.61L14.97,4.52L16.87,2.65L19.35,5.13L17.48,7.03L18.39,9.23L21.05,9.25L21.05,12.75L18.39,12.77L17.48,14.97L19.35,16.87L16.87,19.35L14.97,17.48L12.77,18.39L12.75,21.05L9.25,21.05L9.23,18.39L7.03,17.48L5.13,19.35L2.65,16.87L4.52,14.97L3.61,12.77L0.95,12.75L0.95,9.25L3.61,9.23L4.52,7.03L2.65,5.13L5.13,2.65L7.03,4.52L9.23,3.61Z" stroke="#333" fill="none" stroke-width="1.2" stroke-linejoin="round"/><circle cx="11" cy="11" r="3.2" stroke="#333" fill="none" stroke-width="1.2"/></svg>
<div class="ot hl10" style="left:1145px">Settings</div>
<svg style="left:1199px;top:302px" width="22" height="22" viewBox="0 0 22 22"><rect x="1.2" y="3" width="19.6" height="17.6" rx="2.6" stroke="#333" fill="none" stroke-width="1.25"/><path d="M7,0.6V5M15,0.6V5" stroke="#333" fill="none" stroke-width="1.25"/><path d="M5,8.6H14M5,12H12M5,15.4H17" stroke="#333" fill="none" stroke-width="1.25"/></svg>
<div class="ot hl10" style="left:1203px">Log</div>
<svg style="left:1246px;top:302px" width="22" height="22" viewBox="0 0 22 22"><circle cx="11" cy="11" r="10" stroke="#333" fill="none" stroke-width="1.2"/><text x="11" y="15.6" text-anchor="middle" font-family="Liberation Sans,sans-serif" font-size="13" fill="#3a3a3a">?</text></svg>
<div class="ot hl10" style="left:1247px">Help</div>
<svg style="left:1293px;top:303px" width="23" height="19" viewBox="0 0 23 19"><path d="M1.4,7.2Q11.5,-2.6 21.6,7.2" stroke="#333" fill="none" stroke-width="1.5"/><path d="M5,10.6Q11.5,4.2 18,10.6" stroke="#333" fill="none" stroke-width="1.5"/><path d="M8.4,13.8Q11.5,10.8 14.6,13.8" stroke="#333" fill="none" stroke-width="1.5"/><circle cx="11.5" cy="16.8" r="1.3" fill="#3a3a3a"/></svg>
<div class="ot hl10" style="left:1289px">WLAN</div>
<svg style="left:1341px;top:301px" width="22" height="24" viewBox="0 0 22 24"><rect x="1.2" y="1.6" width="3.4" height="4.6" rx="1.4" stroke="#333" fill="none" stroke-width="1"/><rect x="4.6" y="2" width="4" height="3.8" stroke="#333" fill="none" stroke-width="1"/><path d="M8.6,3L16,7.2M8,5.6L14.4,9.4" stroke="#333" fill="none" stroke-width="1"/><circle cx="16.4" cy="9.2" r="2.3" stroke="#333" fill="none" stroke-width="1"/><path d="M15.4,11.4L7.6,18.4M18,10.8L10,19.6" stroke="#333" fill="none" stroke-width="1"/><circle cx="7.6" cy="19.6" r="2.3" stroke="#333" fill="none" stroke-width="1"/><path d="M3.4,22.8H11.6" stroke="#3a3a3a" stroke-width="1.8"/></svg>
<div class="ot hl10" style="left:1331px">OT&nbsp; JKRO</div>
<svg style="left:1371px;top:339px" width="4" height="4" viewBox="0 0 4 4"><path d="M4,0V4H0Z" fill="#222"/></svg>
<div class="ot" style="left:1388px;top:305px;font-size:10.5px;line-height:12px;letter-spacing:2.2px;color:#555">bfb8</div>
<div class="ot" style="left:1388px;top:320px;font-size:10.5px;line-height:12px;letter-spacing:2.2px;color:#555">84ef</div>
<svg style="left:1434px;top:315px" width="22" height="5" viewBox="0 0 22 5"><circle cx="2.2" cy="2.5" r="1.4" fill="#333"/><circle cx="10.8" cy="2.5" r="1.4" fill="#333"/><circle cx="19.4" cy="2.5" r="1.4" fill="#333"/></svg>
<div class="ot tab" style="left:521px">Control Cabinet</div>
<div class="ot tab" style="left:689px">Tool</div>
<div class="ot tab" style="left:804px;color:#e0364a">Modbus</div>
<div class="ot tab" style="left:916px">EtherNet/ IO</div>
<div class="ot tab" style="left:1073px;top:359px">test</div>
<div class="rl" style="left:514px;top:395px;width:960px;height:1px"></div>
<div class="rl" style="left:769px;top:393px;width:127px;height:3px"></div>
<div class="abs" style="left:1312px;top:353px;width:122px;height:25px;border-radius:13px;background:#ececec"></div>
<div class="abs" style="left:1312px;top:353px;width:90px;height:25px;border-radius:13px;background:#d9081e"></div>
<svg style="left:1318px;top:359px" width="13" height="12" viewBox="0 0 13 12"><path d="M0.6,1.4H12.4" stroke="#fff" fill="none" stroke-width="1.2"/><path d="M2,1.4V10.6H11V1.4" stroke="#fff" fill="none" stroke-width="1.2"/><path d="M4.6,3.6V8.4M6.5,3.6V8.4M8.4,3.6V8.4" stroke="#fff" fill="none" stroke-width="1"/></svg>
<svg style="left:1351px;top:359px" width="12" height="12" viewBox="0 0 12 12"><circle cx="6" cy="6" r="5.4" stroke="#fff" fill="none" stroke-width="1" stroke-dasharray="3.6 .7"/></svg>
<svg style="left:1383px;top:359px" width="13" height="12" viewBox="0 0 13 12"><path d="M7,1.6H1.2V11.2H10.6V6" stroke="#fff" fill="none" stroke-width="1.2"/><path d="M4.4,8L5,5.6L10.4,0.6L12,2.2L6.8,7.4Z" stroke="#fff" fill="none" stroke-width="1"/></svg>
<svg style="left:1415px;top:358px" width="14" height="14" viewBox="0 0 14 14"><circle cx="7" cy="7" r="5.7" stroke="#666" fill="none" stroke-width=".9" stroke-dasharray="15.6 2.3" transform="rotate(-150 7 7)"/><path d="M5.6,4.6Q5.6,4 6.2,4.3L9.6,6.6Q10,7 9.6,7.4L6.2,9.7Q5.6,10 5.6,9.4Z" stroke="#666" fill="none" stroke-width=".9" stroke-linejoin="round"/><path d="M0.4,4.4L2.2,4.6L2.6,2.8M13.6,9.6L11.8,9.4L11.4,11.2" stroke="#666" fill="none" stroke-width=".8"/></svg>
<div class="ot act" style="left:1312px">Delete</div>
<div class="ot act" style="left:1344px">Add</div>
<div class="ot act" style="left:1380px">Edit</div>
<div class="ot act" style="left:1416.5px">Run</div>
<div class="bar" style="left:554px;top:413px"></div>
<div class="ot sec" style="left:564px;top:411px">Digital Input</div>
<div class="ot cne" style="left:883px;top:419px">Click Name to Edit</div>
<div class="box" style="left:554px;top:438px;width:420px;height:163px"></div>
<div class="bar" style="left:1014px;top:413px"></div>
<div class="ot sec" style="left:1024px;top:411px">Digital Output</div>
<div class="ot cne" style="left:1343px;top:419px">Click Name to Edit</div>
<div class="box" style="left:1014px;top:438px;width:420px;height:163px"></div>
<div class="bar" style="left:554px;top:618px"></div>
<div class="ot sec" style="left:564px;top:616px">Analog Input</div>
<div class="ot cne" style="left:883px;top:624px">Click Name to Edit</div>
<div class="box" style="left:554px;top:643px;width:420px;height:163px"></div>
<div class="bar" style="left:1014px;top:618px"></div>
<div class="ot sec" style="left:1024px;top:616px">Analog Output</div>
<div class="ot cne" style="left:1343px;top:624px">Click Name to Edit</div>
<div class="box" style="left:1014px;top:643px;width:420px;height:163px"></div>
<div class="ledon" style="left:598px;top:458px"></div>
<div class="ot lbl" style="left:574px;top:480px">DI_1</div>
<div class="led" style="left:678px;top:458px"></div>
<div class="ot lbl" style="left:654px;top:480px">DI_2</div>
<div class="led" style="left:758px;top:458px"></div>
<div class="ot lbl" style="left:734px;top:480px">DI_3</div>
<div class="led" style="left:838px;top:458px"></div>
<div class="ot lbl" style="left:814px;top:480px">DI_4</div>
<div class="led" style="left:918px;top:458px"></div>
<div class="ot lbl" style="left:894px;top:480px">DI_5</div>
<div class="led" style="left:598px;top:533px"></div>
<div class="ot lbl" style="left:574px;top:555px">DI_6</div>
<div class="led" style="left:678px;top:533px"></div>
<div class="ot lbl" style="left:654px;top:555px">DI_7</div>
<div class="led" style="left:758px;top:533px"></div>
<div class="ot lbl" style="left:734px;top:555px">DI_8</div>
<div class="led" style="left:838px;top:533px"></div>
<div class="ot lbl" style="left:814px;top:555px">DI_9</div>
<div class="led" style="left:918px;top:533px"></div>
<div class="ot lbl" style="left:894px;top:555px">DI_10</div>
<div class="sb" style="left:963.5px;top:443px;height:48px"></div>
<div class="trk" style="left:1044px;top:458px"></div>
<div class="knob" style="left:1077px;top:458px"></div>
<div class="ot on" style="left:1057px;top:464px">ON</div>
<div class="ot lbl" style="left:1044px;top:490px">DO_1</div>
<div class="trk" style="left:1139px;top:458px"></div>
<div class="knob" style="left:1172px;top:458px"></div>
<div class="ot on" style="left:1152px;top:464px">ON</div>
<div class="ot lbl" style="left:1139px;top:490px">DO_2</div>
<div class="trk" style="left:1234px;top:458px"></div>
<div class="knob" style="left:1236px;top:458px"></div>
<div class="ot off" style="left:1264px;top:464px">OFF</div>
<div class="ot lbl" style="left:1234px;top:490px">DO_3</div>
<div class="trk" style="left:1329px;top:458px"></div>
<div class="knob" style="left:1331px;top:458px"></div>
<div class="ot off" style="left:1359px;top:464px">OFF</div>
<div class="ot lbl" style="left:1329px;top:490px">DO_4</div>
<div class="trk" style="left:1044px;top:543px"></div>
<div class="knob" style="left:1046px;top:543px"></div>
<div class="ot off" style="left:1074px;top:549px">OFF</div>
<div class="ot lbl" style="left:1044px;top:575px">DO_5</div>
<div class="trk" style="left:1139px;top:543px"></div>
<div class="knob" style="left:1141px;top:543px"></div>
<div class="ot off" style="left:1169px;top:549px">OFF</div>
<div class="ot lbl" style="left:1139px;top:575px">DO_6</div>
<div class="trk" style="left:1234px;top:543px"></div>
<div class="knob" style="left:1236px;top:543px"></div>
<div class="ot off" style="left:1264px;top:549px">OFF</div>
<div class="ot lbl" style="left:1234px;top:575px">DO_7</div>
<div class="trk" style="left:1329px;top:543px"></div>
<div class="knob" style="left:1331px;top:543px"></div>
<div class="ot off" style="left:1359px;top:549px">OFF</div>
<div class="ot lbl" style="left:1329px;top:575px">DO_8</div>
<div class="sb" style="left:1423.5px;top:443px;height:40px"></div>
<div class="ot stab" style="left:563px;top:650px;color:#e0364a">Modbus Integer</div>
<div class="ot stab" style="left:663px;top:650px">Modbus Signed</div>
<div class="ot stab" style="left:768px;top:650px">Modbus Float</div>
<div class="rl" style="left:555px;top:669px;width:418px;height:1px"></div>
<div class="rl" style="left:555px;top:668px;width:100px;height:2px"></div>
<div class="inp" style="left:579px;top:685px">222</div>
<div class="ot lbl" style="left:584px;top:716px">AI_1</div>
<div class="inp" style="left:674px;top:685px">0</div>
<div class="ot lbl" style="left:679px;top:716px">AI_2</div>
<div class="inp" style="left:769px;top:685px">0</div>
<div class="ot lbl" style="left:774px;top:716px">AI_3</div>
<div class="inp" style="left:864px;top:685px">0</div>
<div class="ot lbl" style="left:869px;top:716px">AI_4</div>
<div class="inp" style="left:579px;top:763px">0</div>
<div class="ot lbl" style="left:584px;top:794px;height:11.5px;overflow:hidden">AI_5</div>
<div class="inp" style="left:674px;top:763px">0</div>
<div class="ot lbl" style="left:679px;top:794px;height:11.5px;overflow:hidden">AI_6</div>
<div class="inp" style="left:769px;top:763px">0</div>
<div class="ot lbl" style="left:774px;top:794px;height:11.5px;overflow:hidden">AI_7</div>
<div class="inp" style="left:864px;top:763px">0</div>
<div class="ot lbl" style="left:869px;top:794px;height:11.5px;overflow:hidden">AI_8</div>
<div class="sb" style="left:963.5px;top:675px;height:56px"></div>
<div class="ot stab" style="left:1023px;top:650px;color:#e0364a">Modbus Integer</div>
<div class="ot stab" style="left:1123px;top:650px">Modbus Signed</div>
<div class="ot stab" style="left:1228px;top:650px">Modbus Float</div>
<div class="rl" style="left:1015px;top:669px;width:418px;height:1px"></div>
<div class="rl" style="left:1015px;top:668px;width:100px;height:2px"></div>
<div class="inp" style="left:1044px;top:685px">123</div>
<div class="ot lbl" style="left:1049px;top:716px">AO_1</div>
<div class="inp" style="left:1139px;top:685px">0</div>
<div class="ot lbl" style="left:1144px;top:716px">AO_2</div>
<div class="inp" style="left:1239px;top:685px">0</div>
<div class="ot lbl" style="left:1244px;top:716px">AO_3</div>
<div class="inp" style="left:1334px;top:685px">0</div>
<div class="ot lbl" style="left:1339px;top:716px">AO_4</div>
<div class="inp" style="left:1044px;top:763px">0</div>
<div class="ot lbl" style="left:1049px;top:794px;height:11.5px;overflow:hidden">AO_5</div>
<div class="inp" style="left:1139px;top:763px">0</div>
<div class="ot lbl" style="left:1144px;top:794px;height:11.5px;overflow:hidden">AO_6</div>
<div class="inp" style="left:1239px;top:763px">0</div>
<div class="ot lbl" style="left:1244px;top:794px;height:11.5px;overflow:hidden">AO_7</div>
<div class="inp" style="left:1334px;top:763px">0</div>
<div class="ot lbl" style="left:1339px;top:794px;height:11.5px;overflow:hidden">AO_8</div>
<div class="sb" style="left:1423.5px;top:675px;height:56px"></div>
<svg style="left:976px;top:818px" width="36" height="14" viewBox="0 0 36 14"><path d="M2.4,12.8L17.8,1.8L33.4,12.8" fill="none" stroke="#5e5e5e" stroke-width="1.8"/></svg>
</div>
<svg style="left:0;top:0;pointer-events:none" width="1531" height="875" viewBox="0 0 1531 875"><polygon points="376,78 379.8,96 375.2,92.6 359.2,144.7 357.8,144.3 370,90.6 364,92.6" fill="#ec1c24"/><polygon points="907.7,154.6 893.3,143.8 899.5,143 883.1,110.6 884.3,110.0 904.3,140.6 906.7,137.6" fill="#ec1c24"/><polygon points="961.7,198.9 977.5,192 975,196.2 1051.4,199.2 1051.4,200.6 975,202.2 977.5,206.6" fill="#ec1c24"/><polygon points="1273.3,210.5 1282.7,195.1 1284.6,200.6 1319.8,178.8 1320.6,180.0 1288.2,204.6 1291,207.7" fill="#ec1c24"/><polygon points="1279.2,244.1 1297.2,245.4 1293.2,249.4 1331.3,271.8 1330.7,273.0 1290.6,253.6 1290,258.6" fill="#ec1c24"/><polygon points="621.2,455.6 630.9,440.3 632.4,445.4 685.6,412.9 686.4,414.1 635.8,450.4 639.3,453.2" fill="#ec1c24"/><polygon points="1120.2,457.8 1126.6,441 1128.6,445.8 1165.6,413.0 1166.6,414.0 1133.6,450.4 1137.4,452.3" fill="#ec1c24"/><polygon points="633.4,678.5 638,662.8 640.6,666.4 677.5,625.8 678.5,626.8 646.2,670 650.4,671.6" fill="#ec1c24"/><polygon points="1082.1,683.1 1088.4,668 1091,671.4 1132.7,629.0 1133.7,630.0 1095.8,675.2 1099,677.2" fill="#ec1c24"/></svg>
</body></html>
